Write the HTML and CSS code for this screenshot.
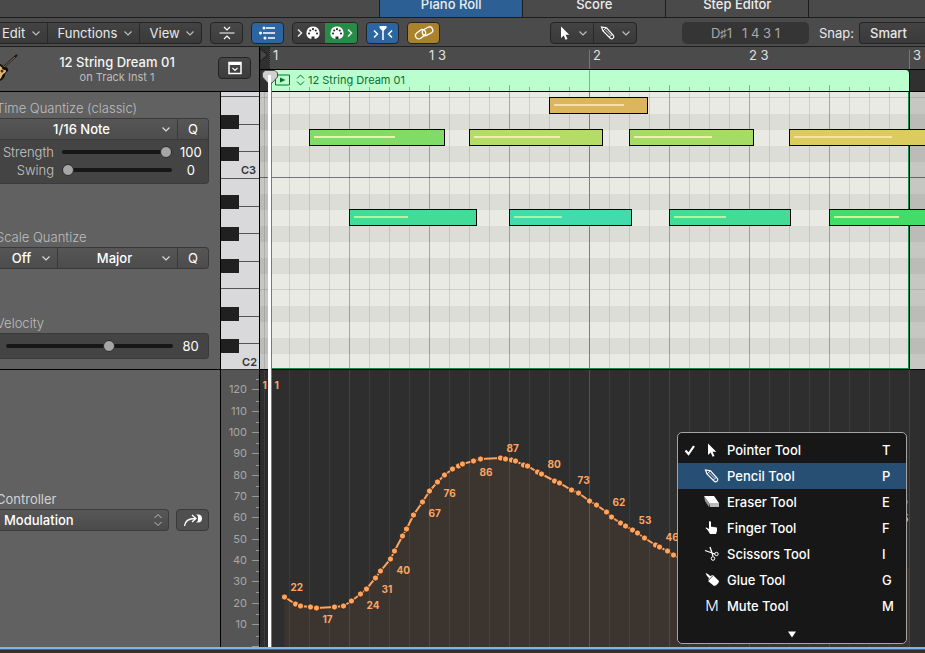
FILE: index.html
```html
<!DOCTYPE html>
<html lang="en">
<head>
<meta charset="utf-8">
<title>Piano Roll</title>
<link rel="stylesheet" href="styles.css">
</head>
<body>
<svg class="defs" aria-hidden="true">
  <symbol id="chev" viewBox="0 0 10 10"><path d="M1.500 3.500 5 7l3.500-3.500" fill="none" stroke="currentColor" stroke-width="1.200"/></symbol>
  <symbol id="pointer" viewBox="0 0 16 16"><path d="M4 1.500v11.500l2.700-2.600 1.900 4.300 1.900-.8-1.900-4.200h3.700z" fill="currentColor"/></symbol>
  <symbol id="pencil" viewBox="0 0 16 16"><path d="M1.500 2l1.500 4 7.500 7.500c1.700 1 4.200-1 3-3L6.500 2.800z" fill="none" stroke="currentColor" stroke-width="1.200"/><path d="M3 6l3-3M9 12.300l3.500-3M5 4.500l6 6" fill="none" stroke="currentColor" stroke-width=".8"/></symbol>
  <symbol id="midi" viewBox="0 0 16 16"><path d="M8 1.500a6.500 6.500 0 0 0-3 12.300h6A6.500 6.500 0 0 0 8 1.500z" fill="currentColor"/><g class="pins"><circle cx="4" cy="8.500" r="1.100"/><circle cx="5.200" cy="5.500" r="1.100"/><circle cx="8" cy="4.200" r="1.100"/><circle cx="10.800" cy="5.500" r="1.100"/><circle cx="12" cy="8.500" r="1.100"/><path d="M6.500 11.500h3V14h-3z"/></g></symbol>
</svg>
<div class="app">
  <nav class="tabs">
    <button class="tab active">Piano Roll</button>
    <button class="tab">Score</button>
    <button class="tab">Step Editor</button>
  </nav>

  <div class="toolbar">
    <div class="group menus">
      <button>Edit <svg class="chev"><use href="#chev"/></svg></button>
      <button>Functions <svg class="chev"><use href="#chev"/></svg></button>
      <button>View <svg class="chev"><use href="#chev"/></svg></button>
    </div>
    <button class="icon-btn" aria-label="Collapse"><svg width="18" height="18" viewBox="0 0 18 18" fill="none" stroke="currentColor" stroke-width="1.200"><path d="M1.500 9h15M6 3l3 3 3-3M6 15l3-3 3 3"/></svg></button>
    <button class="icon-btn blue" aria-label="Automation"><svg width="20" height="18" viewBox="0 0 20 18" fill="none" stroke="currentColor"><path stroke-width="1.400" d="M8 4h9M5 9h12M10 14h7"/><g fill="currentColor" stroke="none"><circle cx="6" cy="4" r="1.500"/><circle cx="2.500" cy="9" r="1.500"/><circle cx="7" cy="14" r="1.500"/></g></svg></button>
    <div class="group midi">
      <button aria-label="MIDI In"><svg width="6" height="10" viewBox="0 0 6 10" fill="none" stroke="currentColor" stroke-width="1.500"><path d="M1 1.500 4.500 5 1 8.500"/></svg><svg class="ic"><use href="#midi"/></svg></button>
      <button class="green" aria-label="MIDI Out"><svg class="ic"><use href="#midi"/></svg><svg width="6" height="10" viewBox="0 0 6 10" fill="none" stroke="currentColor" stroke-width="1.500"><path d="M1 1.500 4.500 5 1 8.500"/></svg></button>
    </div>
    <button class="icon-btn blue" aria-label="Catch"><svg width="22" height="18" viewBox="0 0 22 18" fill="none" stroke="currentColor" stroke-width="1.500"><path d="M2 6.500 5.500 10 2 13.500M20 6.500 16.500 10 20 13.500M11 5v11"/><path d="M7.500 2h7v2L12 6.500h-2L7.500 4z" fill="currentColor" stroke="none"/></svg></button>
    <button class="icon-btn gold" aria-label="Link"><svg width="20" height="16" viewBox="0 0 20 16" fill="none" stroke="currentColor" stroke-width="1.300"><rect x="1" y="6" width="11" height="6.500" rx="3.200" transform="rotate(-38 6.500 9.200)"/><rect x="8" y="3" width="11" height="6.500" rx="3.200" transform="rotate(-28 13.500 6.200)"/></svg></button>
    <span class="space-a"></span>
    <div class="group tools">
      <button aria-label="Left-click tool"><svg class="ic"><use href="#pointer"/></svg><svg class="chev"><use href="#chev"/></svg></button>
      <button aria-label="Command-click tool"><svg class="ic"><use href="#pencil"/></svg><svg class="chev"><use href="#chev"/></svg></button>
    </div>
    <span class="space-b"></span>
    <output class="lcd"><span>D♯1</span><span>1 4 3 1</span></output>
    <label class="snap" for="snap">Snap:</label>
    <select id="snap" class="snap-select"><option>Smart</option></select>
  </div>

  <main class="editor">
    <header class="track">
      <svg class="guitar" width="20" height="30" viewBox="0 0 20 30"><path d="M4 13 17 1" stroke="#161212" stroke-width="2"/><path d="M3 14 15 3" stroke="#8a7a6a"/><path d="M-6 15c3-5 7-6 9-3 1 2 4 0 5 3s-3 3-3 6-4 8-11 6z" fill="#15100c"/><path d="M-5 16c3-4 6-5 7-2 1 3 4 1 4 3s-3 2-4 5-3 5-7 4z" fill="#e0b878"/><circle cx="2" cy="17" r="1.500" fill="#4c2c14"/></svg>
      <div class="names"><strong>12 String Dream 01</strong><span>on Track Inst 1</span></div>
      <button class="icon-btn" aria-label="Show inspector"><svg width="14" height="14" viewBox="0 0 14 14"><path d="M1 1.500h12v11H1z" fill="none" stroke="currentColor" stroke-width="1.500"/><path d="M1 1h12v3H1z" fill="currentColor"/><path d="M4.500 7 7 9.500 9.500 7" fill="none" stroke="currentColor" stroke-width="1.200"/></svg></button>
    </header>

    <div class="timeline">
      <div class="ruler">
        <svg width="9" height="22" viewBox="0 0 9 22"><path d="M0 0h9v22H0z" fill="#303030"/><path d="M0 1.500 7.500 8 0 14.500z" fill="#484848" stroke="#1c1c1c"/></svg>
        <span class="bar first">1</span><span>1 3</span><span class="bar">2</span><span>2 3</span><span class="bar">3</span>
      </div>
      <div class="region-row">
        <div class="region">
          <svg width="15" height="12" viewBox="0 0 15 12"><path d="M.5 1h14v10H.5z" fill="none" stroke="currentColor"/><path d="M5 3.500 10.500 6 5 8.500z" fill="currentColor"/></svg>
          <svg width="9" height="12" viewBox="0 0 9 12" fill="none" stroke="currentColor"><path d="M1 4.500 4.500 1 8 4.500M1 7.500 4.500 11 8 7.500"/></svg>
          <span>12 String Dream 01</span>
        </div>
      </div>
    </div>

    <section class="inspector">
      <label class="title" for="tq">Time Quantize (classic)</label>
      <div class="box">
        <div class="row">
          <span class="pick wide"><select id="tq"><option>1/16 Note</option></select><svg class="chev"><use href="#chev"/></svg></span>
          <button class="q">Q</button>
        </div>
        <div class="sliders">
          <label for="strength">Strength</label><input id="strength" type="range" min="0" max="100" value="100"><output>100</output>
          <label for="swing">Swing</label><input id="swing" type="range" min="0" max="100" value="0"><output>0</output>
        </div>
      </div>
      <label class="title scale" for="sq">Scale Quantize</label>
      <div class="box">
        <div class="row">
          <span class="pick small"><select id="sq"><option>Off</option></select><svg class="chev"><use href="#chev"/></svg></span>
          <span class="pick wide key"><select aria-label="Scale"><option>Major</option></select><svg class="chev"><use href="#chev"/></svg></span>
          <button class="q">Q</button>
        </div>
      </div>
      <label class="title velocity" for="vel">Velocity</label>
      <div class="box vel-row"><input id="vel" type="range" min="1" max="127" value="80"><output>80</output></div>
    </section>

    <svg class="keys" width="39" height="277" viewBox="0 0 39 277">
      <g class="seams"><path d="M0 4.500h38M0 32.500h38M0 59.500h38M0 86.500h38M0 114.500h38M0 141.500h38M0 169.500h38M0 196.500h38M0 224.500h38M0 251.500h38"/></g>
      <path class="black" d="M0 23h18v14H0zM0 55h18v14H0zM0 103h18v14H0zM0 135h18v14H0zM0 167h18v14H0zM0 215h18v14H0zM0 247h18v14H0z"/>
      <path d="M38.500 0v277" stroke="#000"/>
      <text x="35" y="82">C3</text><text x="36" y="274">C2</text>
    </svg>

    <div class="roll">
      <div class="shade before"></div>
      <div class="shade after"></div>
      <div class="region-edge"></div>
      <div class="note n1"><i></i></div>
      <div class="note n2"><i></i></div>
      <div class="note n3"><i></i></div>
      <div class="note n4"><i></i></div>
      <div class="note n5"><i></i></div>
      <div class="note n6"><i></i></div>
      <div class="note n7"><i></i></div>
      <div class="note n8"><i></i></div>
      <div class="note n9"><i></i></div>
    </div>

    <section class="controller">
      <label for="ctl">Controller</label>
      <div class="ctl-row">
        <span class="pick ctl"><select id="ctl"><option>Modulation</option></select><svg class="updown" width="10" height="14" viewBox="0 0 10 14" fill="none" stroke="currentColor"><path d="M1.500 5 5 1.500 8.500 5M1.500 9 5 12.500 8.500 9"/></svg></span>
        <button class="icon-btn" aria-label="Catch controller"><svg width="20" height="14" viewBox="0 0 20 14"><path d="M1.500 13C2 8 5 5.500 12 5.500M9 2l4 3.500L9 9" fill="none" stroke="currentColor" stroke-width="1.300"/><path d="M13 1.500h2a4 4 0 0 1 0 8h-2c2-1 2-2 2-4s0-3-2-4z" fill="currentColor"/></svg></button>
      </div>
    </section>

    <svg class="scale-col" width="39" height="277" viewBox="0 0 39 277">
      <path d="M31 19.500h7M31 41.500h7M31 62.500h7M31 83.500h7M31 105.500h7M31 126.500h7M31 147.500h7M31 169.500h7M31 190.500h7M31 211.500h7M31 233.500h7M31 254.500h7M31 276.500h7M35 9.500h3M35 31.500h3M35 52.500h3M35 73.500h3M35 95.500h3M35 116.500h3M35 137.500h3M35 158.500h3M35 180.500h3M35 201.500h3M35 222.500h3M35 244.500h3M35 266.500h3"/>
      <path d="M38.500 0v277" class="edge"/>
      <g><text x="26" y="23">120</text><text x="26" y="45">110</text><text x="26" y="66">100</text><text x="26" y="87">90</text><text x="26" y="109">80</text><text x="26" y="130">70</text><text x="26" y="151">60</text><text x="26" y="173">50</text><text x="26" y="194">40</text><text x="26" y="215">30</text><text x="26" y="237">20</text><text x="26" y="258">10</text></g>
    </svg>

    <div class="lane">
      <svg class="curve">
        <defs><marker id="dot" markerUnits="userSpaceOnUse" markerWidth="8" markerHeight="8" refX="4" refY="4"><circle cx="4" cy="4" r="3.100" fill="#ffa45f" stroke="#332219" stroke-width=".9"/></marker></defs>
        <g transform="translate(-259.500 -370)">
          <path class="area" d="M284 597 295 604 300 606 310 607 316 608 334 607 343 606 351 601 360 594 366 589 375 578 380 571 390 559 394 551 402 536 406 529 413 515 422 502 429 491 437 482 444 475 452 469 458 466 462 464 473 461 480 459 500 458 505 459 511 460 515 461 523 465 527 466 537 472 541 474 554 481 559 483 571 490 578 493 589 501 596 505 606 512 611 517 620 523 625 526 632 530 637 533 644 538 655 545 659 547 667 551 673 555 700 568H909V648H284z"/>
          <polyline points="284,597 295,604 300,606 310,607 316,608 334,607 343,606 351,601 360,594 366,589 375,578 380,571 390,559 394,551 402,536 406,529 413,515 422,502 429,491 437,482 444,475 452,469 458,466 462,464 473,461 480,459 500,458 505,459 511,460 515,461 523,465 527,466 537,472 541,474 554,481 559,483 571,490 578,493 589,501 596,505 606,512 611,517 620,523 625,526 632,530 637,533 644,538 655,545 659,547 667,551 673,555 684,560"/>
          <circle cx="904" cy="502" r="3"/>
          <g class="values"><text x="262" y="389">1</text><text x="274" y="389">1</text><text x="290" y="591">22</text><text x="322" y="623">17</text><text x="366" y="609">24</text><text x="381" y="593">31</text><text x="396" y="574">40</text><text x="428" y="517">67</text><text x="443" y="497">76</text><text x="479" y="476">86</text><text x="506" y="452">87</text><text x="547" y="468">80</text><text x="577" y="484">73</text><text x="612" y="506">62</text><text x="638" y="524">53</text><text x="665" y="541">46</text><text x="895" y="522">55</text></g>
        </g>
      </svg>
    </div>

    <div class="playhead"><svg width="16" height="14" viewBox="0 0 16 14"><path d="M3 .5h10L15.500 3v4L10 13H6L.5 7V3z" fill="#cfcfcf" stroke="#4c4c4c"/></svg></div>
  </main>

  <ul class="menu">
    <li><button><span class="tick"><svg width="12" height="12" viewBox="0 0 12 12"><path d="M1.500 6.500 4.500 10 10 2" fill="none" stroke="#fff" stroke-width="2.200"/></svg></span><svg class="ic"><use href="#pointer"/></svg><span>Pointer Tool</span><kbd>T</kbd></button></li>
    <li><button class="on"><span class="tick"></span><svg class="ic"><use href="#pencil"/></svg><span>Pencil Tool</span><kbd>P</kbd></button></li>
    <li><button><span class="tick"></span><svg class="ic" viewBox="0 0 16 16"><path d="M0 2h10l5 7H5z" fill="#fff"/><path d="M0 2l5 7v4L1 7z" fill="#999"/><path d="M5 9h10v4H6z" fill="#bbb"/></svg><span>Eraser Tool</span><kbd>E</kbd></button></li>
    <li><button><span class="tick"></span><svg class="ic" viewBox="0 0 16 16"><path d="M5 1.500c1-.7 2 0 2 1V7l1-.5 1 .7 1-.5 1 .8 1-.4 1 1V11l-1 3H6l-2-3.500L1.500 8c.5-1 1.500-.6 2.500.5L5 9z" fill="currentColor"/></svg><span>Finger Tool</span><kbd>F</kbd></button></li>
    <li><button><span class="tick"></span><svg class="ic" viewBox="0 0 16 16" fill="none" stroke="currentColor"><path stroke-width="1.300" d="M1 4.500 11 8M6 1l3 9"/><circle cx="12.500" cy="8" r="1.700"/><circle cx="9" cy="12.500" r="1.800"/></svg><span>Scissors Tool</span><kbd>I</kbd></button></li>
    <li><button><span class="tick"></span><svg class="ic" viewBox="0 0 16 16"><path d="M1.500 1 4 2l2 2 3-1 6 6c0 2-3 5-5 5L4 9l1-3-2-2z" fill="currentColor"/><path d="M4 9 9 3.500" stroke="#171717" stroke-width=".7"/></svg><span>Glue Tool</span><kbd>G</kbd></button></li>
    <li><button><span class="tick"></span><span class="mute">M</span><span>Mute Tool</span><kbd>M</kbd></button></li>
    <li class="more" aria-hidden="true"><svg width="10" height="7" viewBox="0 0 10 7"><path d="M1 .5h8L5 6.500z" fill="#fff"/></svg></li>
  </ul>
</div>
</body>
</html>
```
FILE: styles.css
```css
* { box-sizing: border-box; }

body {
  margin: 0;
  background: #303030;
  color: #e8e8e8;
  font: 13px/16px Inter, "Liberation Sans", sans-serif;
  overflow: hidden;
}

button, select, input { font: inherit; color: inherit; margin: 0; }
button, select { appearance: none; border: 0; background: none; padding: 0; border-radius: 0; }
button svg, .pick svg { flex: none; }

.defs { display: none; }
.chev { width: 10px; height: 10px; color: #bdbdbd; }
.ic { width: 16px; height: 16px; color: #fff; }
.pins { fill: #303030; }

.app {
  position: relative;
  display: flex;
  flex-direction: column;
  min-height: 100vh;
}

/* Tabs */
.tabs {
  display: flex;
  align-items: flex-end;
  height: 18px;
  padding-left: 41%;
  overflow: hidden;
  background: #4a4a4a;
  border-bottom: 1px solid #1d1d1d;
}
.tab {
  flex: none;
  width: 143px;
  height: 24px;
  padding-bottom: 2px;
  border-right: 1px solid #1d1d1d;
  font-weight: 500;
  color: #ececec;
}
.tab.active { width: 144px; background: #2c5f93; border-left: 1px solid #1d1d1d; }

/* Toolbar */
.toolbar {
  display: flex;
  align-items: center;
  gap: 8px;
  height: 29px;
  padding-top: 1px;
  background: #4b4b4b;
  border-bottom: 1px solid #1f1f1f;
}
.group {
  display: flex;
  flex: none;
  height: 22px;
  border: 1px solid #242424;
  border-radius: 4px;
  background: linear-gradient(#434343, #3a3a3a);
  overflow: hidden;
}
.group button {
  display: flex;
  align-items: center;
  justify-content: space-between;
  padding: 0 6px 0 10px;
  border-left: 1px solid #2a2a2a;
}
.group button:first-child { border-left: 0; }
.menus { width: 202px; border-left: 0; border-radius: 0 4px 4px 0; }
.menus button { flex: auto; }
.menus button:first-child { padding-left: 2px; }
.icon-btn {
  display: flex;
  flex: none;
  align-items: center;
  justify-content: center;
  width: 33px;
  height: 22px;
  border: 1px solid #242424;
  border-radius: 4px;
  background: linear-gradient(#474747, #3d3d3d);
  color: #fff;
}
.blue { background: #2c66a2; }
.gold { background: #a8822c; }
.midi { width: 66px; }
.midi button, .tools button { flex: 1; padding: 0 4px; }
.midi .green { background: #288c49; border-left: 0; }
.space-a { flex: 94; }
.tools { width: 87px; }
.tools button { padding: 0 5px 0 6px; }
.space-b { flex: 29; }
.lcd {
  display: flex;
  flex: none;
  justify-content: center;
  gap: 10px;
  width: 127px;
  padding: 3px 0;
  border-radius: 5px;
  background: #353535;
  color: #a9a9a9;
}
.snap { width: 32px; margin-left: 2px; flex: none; white-space: nowrap; }
.snap-select {
  flex: none;
  width: 68px;
  margin-right: -2px;
  height: 22px;
  padding-left: 10px;
  border: 1px solid #242424;
  border-right: 0;
  border-radius: 4px 0 0 4px;
  background: linear-gradient(#434343, #3a3a3a);
  font-weight: 500;
}

/* Editor grid */
.editor {
  position: relative;
  display: grid;
  grid-template-columns: 221px 39px minmax(0, 1fr);
  grid-template-rows: 45px 278px 277px;
  border-bottom: 2px solid #7db4ee;
  box-shadow: 0 1px #606060;
}

.track {
  grid-column: 1 / 3;
  display: flex;
  align-items: center;
  padding-right: 8px;
  background: #555;
  border-right: 1px solid #000;
  border-bottom: 1px solid #000;
}
.track .guitar { flex: none; }
.track .icon-btn { margin-bottom: 2px; }
.names { flex: 1; display: flex; flex-direction: column; align-items: center; padding-right: 4px; line-height: 15px; }
.names strong { font-weight: 500; color: #f4f4f4; }
.names span { font-size: 11px; line-height: 14px; color: #bcbcbc; }

.timeline { background: #4b4b4b; border-bottom: 1px solid #000; overflow: hidden; }
.ruler { display: flex; height: 22px; color: #e0e0e0; }
.ruler svg { flex: none; }
.ruler span { flex: none; width: 160px; }
.ruler .bar { margin-top: 3px; padding-left: 3px; border-left: 1px solid #777; line-height: 10px; }
.ruler .first { margin-top: 0; padding-top: 3px; border-left: 1px dotted #222; }
.region-row {
  height: 22px;
  padding-left: 10px;
  border-top: 1px solid #000;
  background: #303030;
}
.region {
  position: relative;
  display: flex;
  align-items: center;
  gap: 6px;
  width: 640px;
  height: 21px;
  padding: 0 0 2px 5px;
  border-right: 1px solid #000;
  border-top-right-radius: 4px;
  color: #08702f;
  font-size: 11px;
  background: linear-gradient(#7fb28f, #7fb28f) 319px 0 / 1px 100% no-repeat, #bbffcf;
}
.region::after {
  content: "";
  position: absolute;
  inset: auto 0 0 -1px;
  height: 6px;
  background:
    repeating-linear-gradient(90deg, #82b592 0 1px, transparent 1px 20px) 0 2px / 100% 4px no-repeat,
    repeating-linear-gradient(90deg, #82b592 0 1px, transparent 1px 80px);
}
.region span { margin-left: -3px; }

/* Inspector */
.inspector {
  display: flex;
  flex-direction: column;
  padding: 8px 11px 0 0;
  background: #616161;
  border-right: 1px solid #000;
  border-bottom: 1px solid #000;
}
.title { margin-left: -4px; height: 18px; color: #bebebe; font-weight: 300; }
.scale { margin-top: 45px; }
.velocity { margin-top: 46px; }
.box {
  border: 1px solid #3a3a3a;
  border-left: 0;
  border-radius: 0 4px 4px 0;
  background: #444;
}
.row { display: flex; height: 20px; background: linear-gradient(#565656, #4c4c4c); border-radius: 0 3px 3px 0; }
.pick { display: flex; align-items: center; position: relative; color: #fff; font-weight: 500; }
.pick select { width: 100%; height: 100%; text-align: center; text-align-last: center; padding-right: 14px; }
.pick .chev { margin-left: -16px; margin-right: 6px; pointer-events: none; color: #ddd; }
.wide { flex: 1; border-right: 1px solid #3a3a3a; }
.wide.key select { padding-right: 6px; }
.small { width: 58px; border-right: 1px solid #3a3a3a; }
.q { width: 30px; color: #fff; }
.sliders {
  display: grid;
  grid-template-columns: 54px 110px 1fr;
  column-gap: 8px;
  align-items: center;
  grid-auto-rows: 18px;
  padding: 3px 7px 4px 0;
  border-top: 1px solid #3a3a3a;
}
.sliders label { text-align: right; color: #c6c6c6; font-weight: 300; white-space: nowrap; }
output { text-align: center; }
.box output { color: #fff; }

input[type="range"] { appearance: none; width: 100%; height: 14px; background: none; }
input[type="range"]::-webkit-slider-runnable-track { height: 4px; border-radius: 2px; background: #171717; }
input[type="range"]::-webkit-slider-thumb {
  appearance: none;
  width: 12px;
  height: 12px;
  margin-top: -4px;
  border: 1px solid #2b2b2b;
  border-radius: 50%;
  background: #a6a6a6;
}
.vel-row { display: grid; grid-template-columns: 167px 1fr; align-items: center; height: 26px; padding-left: 6px; }

/* Keyboard */
.keys { display: block; background: #d9d9db; }
.keys .seams { stroke: #555; }
.keys .black { fill: #202020; }
.keys text { font-size: 11px; font-weight: 600; text-anchor: end; fill: #333; }

/* Note grid */
.roll {
  position: relative;
  overflow: hidden;
  border-bottom: 1px solid #000;
  background:
    linear-gradient(#7d7d7d, #7d7d7d) 329px 0 / 1px 100% no-repeat,
    repeating-linear-gradient(90deg, #0003 0 1px, transparent 1px 80px) 9px 0,
    repeating-linear-gradient(90deg, #0000001c 0 1px, transparent 1px 20px) 9px 0,
    linear-gradient(
      #e9eae4 16px, #dcddd7 16px 32px, #e9eae4 32px 48px, #dcddd7 48px 64px,
      #e9eae4 64px 80px, #dcddd7 80px 96px, #e9eae4 96px 111px, #cfd0ca 111px 112px,
      #e9eae4 112px 128px, #dcddd7 128px 144px, #e9eae4 144px 160px,
      #dcddd7 160px 176px, #e9eae4 176px 191px, #777 191px
    ) 0 86px / 100% 192px;
}
.shade { position: absolute; top: 0; bottom: 0; background: #00000026; }
.before { left: 0; width: 9px; }
.after { left: 650px; right: 0; }
.region-edge {
  position: absolute;
  left: 11px;
  top: 0;
  bottom: 0;
  width: 638px;
  border: solid #178a45;
  border-width: 0 1px 1px 0;
  box-shadow: 1px 0 #000;
}
.note { position: absolute; height: 17px; border: 1px solid #000; }
.note i { display: block; height: 2px; margin: 6px 0 0 4px; background: #efefae; }
.n1 { left: 289px; top: 5px; width: 99px; background: #dcb65e; }
.n1 i { width: 70px; background: #f8dda6; }
.n2 { left: 49px; top: 37px; width: 136px; background: #7fdc66; }
.n2 i { width: 81px; }
.n3 { left: 209px; top: 37px; width: 134px; background: #b5dc67; }
.n3 i { width: 86px; }
.n4 { left: 369px; top: 37px; width: 125px; background: #a4dc65; }
.n4 i { width: 78px; }
.n5 { left: 529px; top: 37px; width: 150px; background: #dccb5f; }
.n5 i { width: 98px; background: #f8e3a6; }
.n6 { left: 89px; top: 117px; width: 128px; background: #42dc98; }
.n6 i { width: 54px; background: #b9f2a6; }
.n7 { left: 249px; top: 117px; width: 123px; background: #42dcac; }
.n7 i { width: 48px; background: #a9f2b2; }
.n8 { left: 409px; top: 117px; width: 122px; background: #42dc96; }
.n8 i { width: 52px; background: #b9f2a6; }
.n9 { left: 569px; top: 117px; width: 130px; background: #42dc66; }
.n9 i { width: 65px; background: #d5f2a0; }

/* Controller lane */
.controller {
  padding: 121px 11px 0 0;
  background: #616161;
  border-right: 1px solid #000;
}
.controller label { display: block; height: 18px; margin-left: -4px; color: #d2d2d2; }
.ctl-row { display: flex; justify-content: space-between; }
.ctl { width: 169px; height: 22px; border: 1px solid #3c3c3c; border-left: 0; border-radius: 0 4px 4px 0; background: linear-gradient(#575757, #4b4b4b); }
.ctl select { padding-left: 4px; text-align: left; text-align-last: left; }
.updown { margin-left: -15px; margin-right: 5px; color: #bbb; }
.controller .icon-btn { background: #4f4f4f; border-color: #3a3a3a; }

.scale-col { display: block; background: #555; stroke: #999; }
.scale-col .edge { stroke: #000; }
.scale-col text { font-size: 11px; text-anchor: end; fill: #a8a8a8; stroke: none; }

.lane {
  position: relative;
  background: #2e2e2e;
}
.lane::after {
  content: "";
  position: absolute;
  inset: 0;
  background:
    repeating-linear-gradient(90deg, #ffffff10 0 1px, transparent 1px 20px) 9px 0,
    repeating-linear-gradient(90deg, #ffffff0c 0 1px, transparent 1px 80px) 9px 0,
    linear-gradient(#ffffff14, #ffffff14) 329px 0 / 1px 100% no-repeat;
}
.curve { display: block; width: 100%; height: 277px; fill: #ffa45f; }
.curve .area { fill: #3c342f; }
.curve polyline { fill: none; stroke: #ffa45f; stroke-width: 2; marker: url(#dot); }
.values { font-size: 10px; font-weight: 700; }

.playhead {
  position: absolute;
  left: 268px;
  top: 24px;
  bottom: 0;
  width: 4px;
  background: #fff;
  border: solid #777;
  border-width: 0 1px 0 0;
}
.playhead svg { position: absolute; left: -6px; top: -1px; }
.playhead::after { content: ""; position: absolute; left: 0; top: 4px; width: 3px; height: 12px; background: #fff; }

/* Tool menu */
.menu {
  position: absolute;
  right: 18px;
  bottom: 9px;
  width: 230px;
  margin: 0;
  padding: 4px 0 0;
  list-style: none;
  border: 1px solid #a5a5a5;
  border-radius: 5px;
  background: #171717;
  color: #fff;
  font-weight: 500;
}
.menu button {
  display: flex;
  align-items: center;
  width: 100%;
  height: 26px;
  padding: 0 13px 0 6px;
  text-align: left;
}
.menu .on { background: #274e73; }
.menu .tick { display: flex; width: 20px; }
.menu .ic, .mute { width: 16px; margin-right: 7px; }
.mute { text-align: center; font-weight: 300; font-size: 15px; }
.menu kbd { width: 11px; margin-left: auto; font: inherit; }
.more { display: flex; justify-content: center; align-items: center; height: 24px; padding-top: 6px; }
```
